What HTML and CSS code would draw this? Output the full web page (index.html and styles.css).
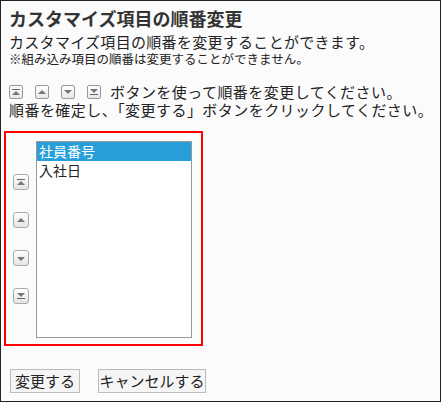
FILE: index.html
```html
<!DOCTYPE html>
<html lang="ja">
<head>
    <meta charset="UTF-8">
    <meta name="viewport" content="width=device-width, initial-scale=1.0">
    <title>カスタマイズ項目の順番変更</title>
    <link rel="stylesheet" href="styles.css">
</head>
<body>
    <div class="frame">
        <h1>カスタマイズ項目の順番変更</h1>
        <p class="lead">カスタマイズ項目の順番を変更することができます。</p>
        <p class="note">※組み込み項目の順番は変更することができません。</p>

        <div class="howto">
            <p class="line icons">
                <span class="mini top"></span>
                <span class="mini up"></span>
                <span class="mini down"></span>
                <span class="mini bottom"></span>
                <span class="after">ボタンを使って順番を変更してください。</span>
            </p>
            <p class="line">順番を確定し、「変更する」ボタンをクリックしてください。</p>
        </div>

        <div class="order-box">
            <div class="order-btns">
                <button class="move top" title="一番上へ"></button>
                <button class="move up" title="上へ"></button>
                <button class="move down" title="下へ"></button>
                <button class="move bottom" title="一番下へ"></button>
            </div>
            <div class="listbox">
                <div class="opt selected">社員番号</div>
                <div class="opt">入社日</div>
            </div>
        </div>

        <div class="actions">
            <button class="btn ok">変更する</button>
            <button class="btn cancel">キャンセルする</button>
        </div>
    </div>
</body>
</html>
```

FILE: styles.css
```css
html, body {
    margin: 0;
    padding: 0;
}
body {
    font-family: "Noto Sans CJK JP", "Noto Sans", sans-serif;
    color: #222;
    background: #fbfbfb;
}
.frame {
    box-sizing: border-box;
    width: 441px;
    height: 402px;
    border: 1px solid #222;
    padding: 6px 8px 0 8px;
    background: #fbfbfb;
}
h1 {
    margin: 0 0 4px 0;
    font-size: 18px;
    line-height: 22px;
    font-weight: bold;
    color: #333;
}
p {
    margin: 0;
}
.lead {
    font-size: 15px;
    line-height: 18px;
    letter-spacing: 0.3px;
}
.note {
    font-size: 12.5px;
    line-height: 16px;
}
.howto {
    margin-top: 16px;
}
.line {
    font-size: 15px;
    line-height: 18px;
    letter-spacing: 0.45px;
    white-space: nowrap;
}
.icons {
    display: flex;
    align-items: center;
    gap: 12px;
}
.after {
    margin-left: -3px;
}

/* small icon in the text line */
.mini {
    position: relative;
    flex: none;
    box-sizing: border-box;
    width: 14px;
    height: 14px;
    border: 1px solid #999;
    border-radius: 2px;
    background: linear-gradient(#fff, #e8e8e8);
}

/* triangles shared by mini icons and move buttons */
.mini::before, .move::before {
    content: "";
    position: absolute;
    left: 50%;
    width: 0;
    height: 0;
    border-left: 4px solid transparent;
    border-right: 4px solid transparent;
    transform: translateX(-50%);
}
.mini::after, .move::after {
    content: "";
    position: absolute;
    left: 50%;
    width: 8px;
    height: 1px;
    background: #666;
    transform: translateX(-50%);
}
.up::before, .top::before {
    border-bottom: 4px solid #777;
}
.down::before, .bottom::before {
    border-top: 4px solid #777;
}
.up::after, .down::after { display: none; }

.mini.top::before { top: 5px; }
.mini.top::after { top: 3px; }
.mini.up::before { top: 4px; }
.mini.down::before { top: 4px; }
.mini.bottom::before { top: 3px; }
.mini.bottom::after { top: 8px; }

.order-box {
    display: flex;
    box-sizing: border-box;
    width: 199px;
    height: 215px;
    margin: 12px 0 0 -5px;
    padding: 8px 0 0 7px;
    border: 2px solid #f00;
}
.order-btns {
    display: flex;
    flex-direction: column;
    gap: 22px;
    padding-top: 33px;
    width: 16px;
    margin-right: 7px;
}
.move {
    position: relative;
    width: 16px;
    height: 16px;
    padding: 0;
    border: 1px solid #aaa;
    border-radius: 3px;
    background: linear-gradient(#fff, #e4e4e4);
    cursor: pointer;
}
.move.top::before { top: 6px; }
.move.top::after { top: 4px; }
.move.up::before { top: 5px; }
.move.down::before { top: 6px; }
.move.bottom::before { top: 4px; }
.move.bottom::after { top: 9px; }

.listbox {
    box-sizing: border-box;
    width: 156px;
    height: 197px;
    border: 1px solid #999;
    background: #fff;
    font-size: 14px;
}
.opt {
    height: 19px;
    line-height: 19px;
    padding-left: 2px;
}
.opt.selected {
    background: #289fd9;
    color: #fff;
}

.actions {
    display: flex;
    gap: 18px;
    margin-top: 23px;
    padding-left: 1px;
}
.btn {
    box-sizing: border-box;
    height: 24px;
    padding: 0;
    border: 1px solid #bbb;
    border-radius: 0;
    background: #f5f5f5;
    font-family: "Noto Sans CJK JP", "Noto Sans", sans-serif;
    font-size: 15px;
    line-height: 20px;
    color: #222;
}
.btn.ok { width: 70px; }
.btn.cancel { width: 108px; }
```
